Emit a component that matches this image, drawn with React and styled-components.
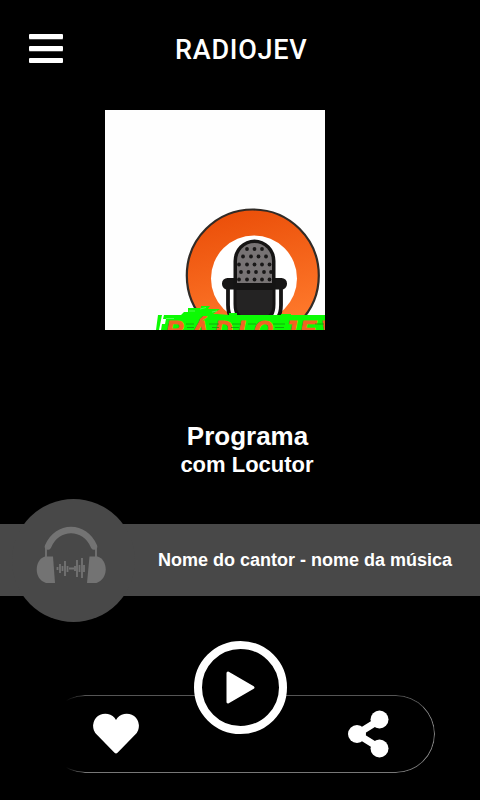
import { useState } from "react";
import styled, { createGlobalStyle } from "styled-components";

const GlobalStyle = createGlobalStyle`
  * {
    box-sizing: border-box;
  }

  body {
    margin: 0;
    background: #000;
    color: #fff;
    font-family: "Liberation Sans", Arial, sans-serif;
  }

  button {
    border: none;
    padding: 0;
    background: none;
    color: inherit;
    cursor: pointer;
  }
`;

const Player = styled.main`
  width: 480px;
  height: 800px;
  display: flex;
  flex-direction: column;
  background: #000;
  overflow: hidden;
`;

const Header = styled.header`
  height: 110px;
  display: flex;
  align-items: flex-start;
  padding: 34px 29px 0;

  h1 {
    margin: 0 0 0 112px;
    font-family: Roboto, sans-serif;
    font-size: 27px;
    font-weight: 500;
    line-height: 32px;
    letter-spacing: 0.75px;
  }
`;

const MenuButton = styled.button`
  width: 34px;
  height: 29px;
  display: flex;
  flex-direction: column;
  justify-content: space-between;

  span {
    height: 5px;
    width: 100%;
    border-radius: 1px;
    background: #fff;
    box-shadow: 0 1px 0 #444;
  }

  span:last-child {
    box-shadow: none;
  }
`;

const Cover = styled.div`
  width: 220px;
  height: 220px;
  margin-left: 105px;
  background: #fefefe;
  overflow: hidden;

  svg {
    display: block;
  }
`;

const Program = styled.section`
  height: 194px;
  padding: 91px 0 0 15px;
  text-align: center;
  font-weight: bold;

  h2 {
    margin: 0;
    font-size: 26px;
    line-height: 30px;
  }

  p {
    margin: 0 1px 0 0;
    font-size: 22px;
    line-height: 27px;
  }
`;

const SongBar = styled.section`
  height: 72px;
  flex-shrink: 0;
  display: flex;
  align-items: center;
  padding-left: 12px;
  background: #484848;
`;

const SongBadge = styled.div`
  width: 123px;
  height: 123px;
  flex-shrink: 0;
  border-radius: 50%;
  background: #484848;
`;

const SongName = styled.span`
  margin-left: 23px;
  font-size: 18px;
  font-weight: bold;
  white-space: nowrap;
`;

const Dock = styled.footer`
  position: relative;
  width: 389px;
  height: 78px;
  margin: 99px 0 0 46px;
  display: flex;
  align-items: center;
  justify-content: space-between;
  padding: 0 45px 0 46px;

  &::before {
    content: "";
    position: absolute;
    inset: 0;
    border: 1px solid #777;
    border-top-color: #555;
    border-right-color: #888;
    border-radius: 39px;
    mask-image: linear-gradient(to right, transparent 20px, #000 38px);
  }
`;

const IconButton = styled.button`
  position: relative;
  width: 48px;
  height: 48px;

  svg {
    display: block;
  }
`;

const PlayButton = styled.button`
  /* sits over the top edge of the dock */
  position: absolute;
  left: 148px;
  top: -54px;
  width: 93px;
  height: 93px;
  border-radius: 50%;

  && {
    border: 8px solid #fff;
    background: #000;
  }

  svg {
    display: block;
  }
`;

const dotRows = [
  { y: 139, xs: [142, 149.5, 157] },
  { y: 146.5, xs: [138, 146, 153.5, 161] },
  { y: 154.5, xs: [134, 142, 149.5, 157, 164.5] },
  { y: 162, xs: [136, 143.5, 151, 159, 166] },
  { y: 169.5, xs: [134, 142, 149.5, 157, 164.5] },
];

const letters = [
  ["R", 61],
  ["Á", 86],
  ["D", 110],
  ["I", 133],
  ["O", 149],
  ["J", 178],
  ["E", 195],
  ["V", 216],
];

const RadioLogo = () => (
  <svg width="220" height="220" viewBox="0 0 220 220">
    <defs>
      <linearGradient id="ring" x1="0" y1="0" x2="0.25" y2="1">
        <stop offset="0" stopColor="#e94b06" />
        <stop offset="1" stopColor="#ff7a2c" />
      </linearGradient>
    </defs>
    <circle cx="147.800" cy="165.500" r="66" fill="url(#ring)" stroke="#302b27" strokeWidth="2.200" />
    <circle cx="149" cy="168.500" r="43" fill="#fff" />
    {/* stand */}
    <path d="M123 176v19q0 17 16 24M176 176v19q0 17-16 24" fill="none" stroke="#171616" strokeWidth="3.800" />
    <rect x="117" y="168" width="65" height="11.500" rx="5.500" fill="#171616" />
    {/* body */}
    <path d="M128.500 151a21 21.500 0 0 1 42 0v43q0 17-13 17h-16q-13 0-13-17z" fill="#151414" />
    <path d="M132 151a17.500 18 0 0 1 35 0v22h-35z" fill="#777374" />
    <path d="M131.500 180h36v14q0 13-12 13h-12q-12 0-12-13z" fill="#242323" />
    {dotRows.map((row) =>
      row.xs.map((x) => <circle key={`${x}-${row.y}`} cx={x} cy={row.y} r="1.900" fill="#181717" />)
    )}
    {/* station name on its green backing */}
    <path
      d="M53 205h4l-3 15h-3zM59 205h17l3-3h4v-4h13v-2h9l-2 3h12l-7 5h4l12 1v-2h8v2h44v-1h10v1h35v15H56l1-6h3l1-5h-3z"
      fill="#0cfb03"
    />
    <path d="M84 201h6M95 199l6-1.500M107 202l5-1M61 208.500h8" stroke="#fff" strokeWidth="0.600" opacity="0.500" />
    <g
      fill="#f26322"
      stroke="#f26322"
      strokeWidth="1.200"
      fontFamily="Liberation Sans, sans-serif"
      fontSize="24"
      fontWeight="bold"
      fontStyle="italic"
    >
      {letters.map(([char, x]) => (
        <text key={char} x={x} y="228">
          {char}
        </text>
      ))}
    </g>
    <path
      d="M81 214h8M104 214h10M127 214h9M143 214h8M168 214h12M210 214h9M82 217.500h7M107 217.500h7M126 217.500h8M170 217.500h9"
      stroke="#159a10"
      strokeWidth="1"
      opacity="0.800"
    />
  </svg>
);

const Headphones = () => (
  <svg width="123" height="123" viewBox="0 0 123 123" fill="none">
    <g fill="#737373">
      <path d="M33 57.500H41L43 84H34C28 82 24.700 77 24.700 70.500S28 59 33 57.500Z" />
      <path d="M85.500 57.500H77.500L75 84H84.500C90 82 93.700 77 93.700 70.500S90.500 59 85.500 57.500Z" />
    </g>
    <path d="M36 47.500C45 25.500 73 25.500 82 47.500" stroke="#737373" strokeWidth="6.500" strokeLinecap="round" />
    <path d="M34 48v11M84 48v11" stroke="#737373" strokeWidth="1.800" />
    <path
      d="M45.500 68v3M48 65v9M50.500 67v5M53 62v15M55.500 67v6M57 69.500h5M63 67v5M65 61v17M67.500 66v7M70 59v20M72 66v7"
      stroke="#737373"
      strokeWidth="1.800"
    />
  </svg>
);

const Heart = () => (
  <svg width="48" height="48" viewBox="0 0 48 48">
    <path
      d="M24 10A12.200 12.200 0 1 0 4.700 24.500L22.500 42.800Q24 44.300 25.500 42.800L43.300 24.500A12.200 12.200 0 1 0 24 10Z"
      fill="#fff"
    />
  </svg>
);

const Share = () => (
  <svg width="48" height="48" viewBox="0 0 48 48">
    <path d="M37.500 10L15 24L37.500 38" fill="none" stroke="#fff" strokeWidth="7" />
    <g fill="#fff">
      <circle cx="37.500" cy="9.500" r="9" />
      <circle cx="15" cy="24" r="9" />
      <circle cx="37.500" cy="38.500" r="9" />
    </g>
  </svg>
);

const App = () => {
  const [playing, setPlaying] = useState(false);

  return (
    <>
      <GlobalStyle />
      <Player>
        <Header>
          <MenuButton aria-label="Menu">
            <span />
            <span />
            <span />
          </MenuButton>
          <h1>RADIOJEV</h1>
        </Header>
        <Cover>
          <RadioLogo />
        </Cover>
        <Program>
          <h2>Programa</h2>
          <p>com Locutor</p>
        </Program>
        <SongBar>
          <SongBadge>
            <Headphones />
          </SongBadge>
          <SongName>Nome do cantor - nome da música</SongName>
        </SongBar>
        <Dock>
          <IconButton aria-label="Curtir">
            <Heart />
          </IconButton>
          <IconButton aria-label="Compartilhar">
            <Share />
          </IconButton>
          <PlayButton aria-label="Tocar" onClick={() => setPlaying(!playing)}>
            <svg width="77" height="77" viewBox="0 0 77 77">
              {playing ? (
                <path d="M27 24h8v29h-8zM42 24h8v29h-8z" fill="#fff" />
              ) : (
                <path d="M26 24L51 38.500L26 53Z" fill="#fff" stroke="#fff" strokeWidth="3" strokeLinejoin="round" />
              )}
            </svg>
          </PlayButton>
        </Dock>
      </Player>
    </>
  );
};

export default App;
